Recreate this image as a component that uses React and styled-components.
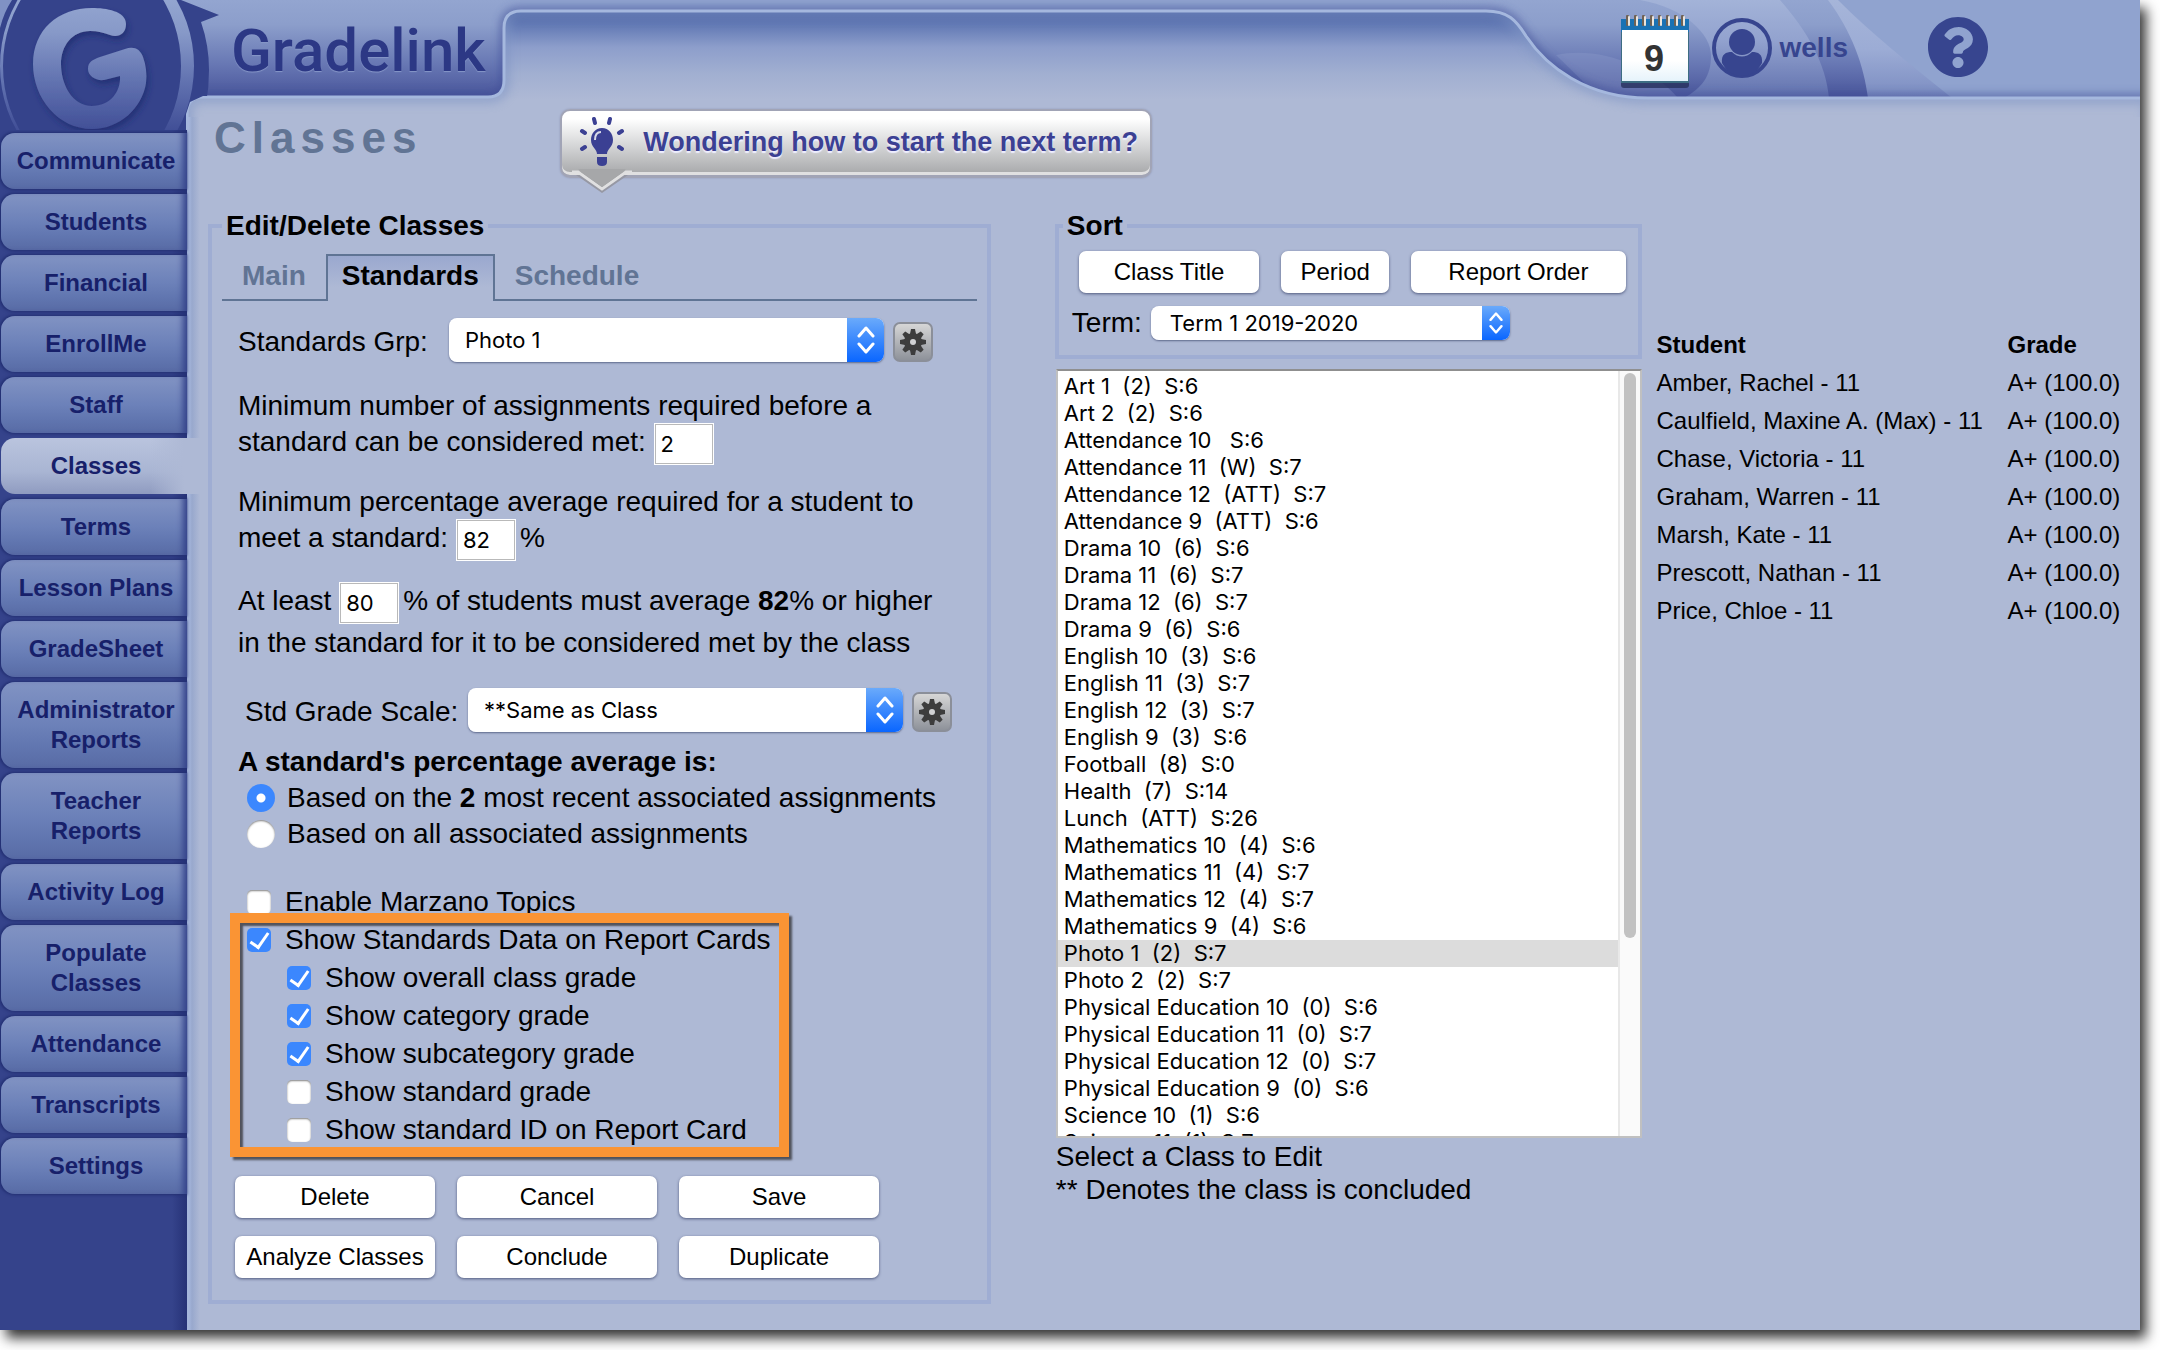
import styled, { createGlobalStyle, css } from "styled-components"
import { useState } from "react"
import { FaQuestionCircle } from "react-icons/fa"

const menu = [
    "Communicate", "Students", "Financial", "EnrollMe", "Staff", "Classes", "Terms",
    "Lesson Plans", "GradeSheet", "Administrator Reports", "Teacher Reports",
    "Activity Log", "Populate Classes", "Attendance", "Transcripts", "Settings",
]

const classes = [
    ["Art 1", "(2)", "S:6"],
    ["Art 2", "(2)", "S:6"],
    ["Attendance 10", "", "S:6"],
    ["Attendance 11", "(W)", "S:7"],
    ["Attendance 12", "(ATT)", "S:7"],
    ["Attendance 9", "(ATT)", "S:6"],
    ["Drama 10", "(6)", "S:6"],
    ["Drama 11", "(6)", "S:7"],
    ["Drama 12", "(6)", "S:7"],
    ["Drama 9", "(6)", "S:6"],
    ["English 10", "(3)", "S:6"],
    ["English 11", "(3)", "S:7"],
    ["English 12", "(3)", "S:7"],
    ["English 9", "(3)", "S:6"],
    ["Football", "(8)", "S:0"],
    ["Health", "(7)", "S:14"],
    ["Lunch", "(ATT)", "S:26"],
    ["Mathematics 10", "(4)", "S:6"],
    ["Mathematics 11", "(4)", "S:7"],
    ["Mathematics 12", "(4)", "S:7"],
    ["Mathematics 9", "(4)", "S:6"],
    ["Photo 1", "(2)", "S:7"],
    ["Photo 2", "(2)", "S:7"],
    ["Physical Education 10", "(0)", "S:6"],
    ["Physical Education 11", "(0)", "S:7"],
    ["Physical Education 12", "(0)", "S:7"],
    ["Physical Education 9", "(0)", "S:6"],
    ["Science 10", "(1)", "S:6"],
    ["Science 11", "(1)", "S:7"],
]

const students = [
    "Amber, Rachel - 11",
    "Caulfield, Maxine A. (Max) - 11",
    "Chase, Victoria - 11",
    "Graham, Warren - 11",
    "Marsh, Kate - 11",
    "Prescott, Nathan - 11",
    "Price, Chloe - 11",
]

const reportOptions = [
    { id: "overall", label: "Show overall class grade", checked: true },
    { id: "category", label: "Show category grade", checked: true },
    { id: "subcategory", label: "Show subcategory grade", checked: true },
    { id: "standard", label: "Show standard grade", checked: false },
    { id: "standardId", label: "Show standard ID on Report Card", checked: false },
]

export default function App() {
    const [tab, setTab] = useState("Standards")
    const [selected, setSelected] = useState("Photo 1")

    return (
        <>
            <GlobalStyle />
            <Shell>
                <HeaderArt />
                <Sidebar>
                    <Logo />
                    <nav>
                        <Menu>
                            {menu.map((m) => (
                                <li key={m}>
                                    <MenuLink href="#" $active={m === "Classes"}>{m}</MenuLink>
                                </li>
                            ))}
                        </Menu>
                    </nav>
                </Sidebar>
                <Page>
                    <Header>
                        <Brand>Gradelink</Brand>
                        <Tools>
                            <IconButton aria-label="Calendar"><CalendarIcon /></IconButton>
                            <UserLink href="#"><UserIcon />wells</UserLink>
                            <HelpButton aria-label="Help"><FaQuestionCircle size={62} /></HelpButton>
                        </Tools>
                    </Header>
                    <Content>
                        <TitleRow>
                            <Title>Classes</Title>
                            <Tip>
                                <BulbIcon />
                                Wondering how to start the next term?
                                <TipPointer />
                            </Tip>
                        </TitleRow>
                        <Columns>
                            <EditColumn>
                                <Panel $pad={10}>
                                    <Legend>Edit/Delete Classes</Legend>
                                    <Tabs role="tablist">
                                        {["Main", "Standards", "Schedule"].map((t) => (
                                            <Tab key={t} role="tab" aria-selected={t === tab} $active={t === tab} onClick={() => setTab(t)}>{t}</Tab>
                                        ))}
                                    </Tabs>
                                    <StandardsForm />
                                    <Actions>
                                        {["Delete", "Cancel", "Save", "Analyze Classes", "Conclude", "Duplicate"].map((a) => (
                                            <Button key={a}>{a}</Button>
                                        ))}
                                    </Actions>
                                </Panel>
                            </EditColumn>
                            <ListColumn>
                                <Panel $pad={4}>
                                    <Legend>Sort</Legend>
                                    <SortButtons>
                                        <Button $grow={180}>Class Title</Button>
                                        <Button $grow={108}>Period</Button>
                                        <Button $grow={214}>Report Order</Button>
                                    </SortButtons>
                                    <TermRow>
                                        <label htmlFor="term">Term:</label>
                                        <Dropdown id="term" options={["Term 1 2019-2020"]} small />
                                    </TermRow>
                                </Panel>
                                <ListFrame>
                                    <ClassList size={28} aria-label="Select a Class to Edit" value={selected} onChange={(e) => setSelected(e.target.value)}>
                                        {classes.map(([name, period, count]) => (
                                            <option key={name} value={name}>
                                                {name + "\u00a0\u00a0" + period + (period ? "\u00a0\u00a0" : "\u00a0") + count}
                                            </option>
                                        ))}
                                    </ClassList>
                                    <Track><Thumb /></Track>
                                </ListFrame>
                                <Notes>
                                    <p>Select a Class to Edit</p>
                                    <p>** Denotes the class is concluded</p>
                                </Notes>
                            </ListColumn>
                            <StudentColumn>
                                <StudentTable>
                                    <thead>
                                        <tr><th>Student</th><th>Grade</th></tr>
                                    </thead>
                                    <tbody>
                                        {students.map((s) => (
                                            <tr key={s}><td>{s}</td><td>A+ (100.0)</td></tr>
                                        ))}
                                    </tbody>
                                </StudentTable>
                            </StudentColumn>
                        </Columns>
                    </Content>
                </Page>
            </Shell>
        </>
    )
}

function StandardsForm() {
    return (
        <Form>
            <FieldRow>
                <FieldLabel htmlFor="group" $width={211}>Standards Grp:</FieldLabel>
                <Dropdown id="group" options={["Photo 1"]} />
                <GearButton aria-label="Edit standards groups"><GearIcon /></GearButton>
            </FieldRow>
            <Paragraph $gap={26}>
                <label htmlFor="minCount">Minimum number of assignments required before a<br />standard can be considered met: </label>
                <NumberInput id="minCount" defaultValue="2" />
            </Paragraph>
            <Paragraph $gap={24}>
                <label htmlFor="minAverage">Minimum percentage average required for a student to<br />meet a standard: </label>
                <NumberInput id="minAverage" defaultValue="82" />%
            </Paragraph>
            <Paragraph $gap={24} $loose>
                <label htmlFor="minStudents">At least </label>
                <NumberInput id="minStudents" defaultValue="80" />% of students must average <b>82</b>% or higher<br />
                in the standard for it to be considered met by the class
            </Paragraph>
            <FieldRow $indent={7} $gap={24}>
                <FieldLabel htmlFor="scale" $width={223}>Std Grade Scale:</FieldLabel>
                <Dropdown id="scale" options={["**Same as Class"]} />
                <GearButton aria-label="Edit grade scales"><GearIcon /></GearButton>
            </FieldRow>
            <Question>A standard's percentage average is:</Question>
            <RadioLabel>
                <Radio name="basis" defaultChecked />
                <span>Based on the <b>2</b> most recent associated assignments</span>
            </RadioLabel>
            <RadioLabel>
                <Radio name="basis" />
                <span>Based on all associated assignments</span>
            </RadioLabel>
            <CheckArea>
                <CheckLabel><Checkbox />Enable Marzano Topics</CheckLabel>
                <Highlight>
                    <CheckLabel><Checkbox defaultChecked />Show Standards Data on Report Cards</CheckLabel>
                    {reportOptions.map((o) => (
                        <CheckLabel key={o.id} $nested><Checkbox defaultChecked={o.checked} />{o.label}</CheckLabel>
                    ))}
                </Highlight>
            </CheckArea>
        </Form>
    )
}

function Dropdown({ id, options, small }) {
    return (
        <SelectBox $small={small}>
            <select id={id}>
                {options.map((o) => <option key={o}>{o}</option>)}
            </select>
            <Stepper $small={small}>
                <svg width="18" height="28" viewBox="0 0 18 28" fill="none" stroke="#fff" strokeWidth="3" strokeLinecap="round" strokeLinejoin="round">
                    <path d="M2 10L9 2L16 10M2 18L9 26L16 18" />
                </svg>
            </Stepper>
        </SelectBox>
    )
}

// top edge of the light page area, with the raised tab in the middle
const panelPath = "M187 150V113Q187 97 203 97H488Q504 97 504 80V28Q504 11 521 11H1486C1508 11 1516 20 1526 36C1546 66 1586 98 1648 98H2150V150Z"

function HeaderArt() {
    return (
        <Art viewBox="0 0 2140 136" preserveAspectRatio="none" aria-hidden="true">
            <defs>
                <linearGradient id="sky" x1="0" y1="0" x2="0" y2="98" gradientUnits="userSpaceOnUse">
                    <stop offset="0" stopColor="#93a5d0" />
                    <stop offset="0.25" stopColor="#8c9ecb" />
                    <stop offset="0.65" stopColor="#6878b4" />
                    <stop offset="1" stopColor="#48549a" />
                </linearGradient>
                <linearGradient id="light" x1="0" y1="0" x2="0" y2="98" gradientUnits="userSpaceOnUse">
                    <stop offset="0" stopColor="#a3b3d8" />
                    <stop offset="0.4" stopColor="#93a3cf" />
                    <stop offset="1" stopColor="#6171ae" />
                </linearGradient>
                <linearGradient id="wedge" x1="0" y1="0" x2="0" y2="98" gradientUnits="userSpaceOnUse">
                    <stop offset="0" stopColor="#a6b5d9" />
                    <stop offset="0.5" stopColor="#9cacd5" />
                    <stop offset="1" stopColor="#7b8cc1" />
                </linearGradient>
                <linearGradient id="well" x1="0" y1="12" x2="0" y2="100" gradientUnits="userSpaceOnUse">
                    <stop offset="0" stopColor="#4a62a3" />
                    <stop offset="0.15" stopColor="#637ab5" />
                    <stop offset="0.4" stopColor="#8d9ecb" />
                    <stop offset="0.7" stopColor="#a1afd1" />
                    <stop offset="1" stopColor="#aeb9d5" />
                </linearGradient>
                <filter id="soft" x="-5%" y="-20%" width="110%" height="140%"><feGaussianBlur stdDeviation="4" /></filter>
                <clipPath id="panelClip"><path d={panelPath} /></clipPath>
            </defs>
            <rect width="2140" height="136" fill="#35438b" />
            <rect x="150" width="1500" height="98" fill="url(#sky)" />
            <rect x="520" width="1110" height="12" fill="#90a3cf" />
            <rect x="1480" width="400" height="98" fill="url(#light)" />
            <path d="M1440 0H1640C1685 8 1711 34 1711 56C1711 76 1702 88 1684 98H1440Z" fill="url(#sky)" />
            <path d="M1556 55C1600 46 1650 66 1678 98H1600Z" fill="#8f9fcc" opacity="0.35" />
            <path d="M1780 0H1832C1854 32 1866 66 1870 98H1829C1826 64 1808 32 1780 0Z" fill="url(#sky)" />
            <path d="M1828 0H1960V98H1868C1864 66 1852 32 1828 0Z" fill="url(#wedge)" />
            <path d="M1838 0H2140V98H1952C1912 66 1872 34 1838 0Z" fill="#90a3cf" />
            <path d={panelPath} fill="none" stroke="#3c4b95" strokeWidth="8" opacity="0.6" filter="url(#soft)" />
            <path d={panelPath} fill="#aeb9d5" />
            <g clipPath="url(#panelClip)">
                <path d="M503 10H1500C1540 20 1550 100 1660 100H503Z" fill="url(#well)" />
                <path d={panelPath} fill="none" stroke="#7f95c5" strokeWidth="14" opacity="0.5" filter="url(#soft)" />
            </g>
            <path d={panelPath} fill="none" stroke="#a5b8de" strokeWidth="3" />
        </Art>
    )
}

function Logo() {
    return (
        <LogoArt viewBox="0 0 222 130" aria-label="Gradelink logo" role="img">
            <defs>
                <linearGradient id="metal" x1="0" y1="0" x2="0" y2="130" gradientUnits="userSpaceOnUse">
                    <stop offset="0" stopColor="#93a5d0" />
                    <stop offset="0.25" stopColor="#8799c8" />
                    <stop offset="0.6" stopColor="#6475b2" />
                    <stop offset="1" stopColor="#414f97" />
                </linearGradient>
                <filter id="glow" x="-20%" y="-20%" width="140%" height="140%"><feDropShadow dx="2" dy="4" stdDeviation="3" floodColor="#1d2a6d" floodOpacity="0.7" /></filter>
                <clipPath id="logoClip"><rect width="222" height="130" /></clipPath>
            </defs>
            <path d="M0 0H181L219 15L201 22Q209 45 209 70Q209 104 198 130H0Z" fill="#35438b" />
            <g clipPath="url(#logoClip)">
                <path d="M0 0H12Q4 12 0 28Z" fill="#8092c4" />
                <path fillRule="evenodd" d="M0 66A97 115 0 0 1 194 66A97 115 0 0 1 0 66ZM3 66A89 110 0 0 1 181 66A89 110 0 0 1 3 66Z" fill="url(#metal)" />
                <path filter="url(#glow)" d="M33 64C33 30 58 8 92 8C106 8 126 11 126 24C126 34 118 38 110 35C104 33 98 31 90 31C72 31 61 46 61 64C61 84 72 106 92 106C110 106 121 92 120 76L104 80C96 81 88 76 88 69C88 62 92 60 100 57L125 49C134 46 140 49 143 57C146 65 147 74 146 83C142 108 120 129 92 129C58 129 33 98 33 64Z" fill="url(#metal)" />
            </g>
        </LogoArt>
    )
}

function CalendarIcon() {
    return (
        <svg width="72" height="76" viewBox="0 0 72 76">
            <defs>
                <linearGradient id="paper" x1="0" y1="0" x2="0" y2="1">
                    <stop offset="0.6" stopColor="#fff" />
                    <stop offset="1" stopColor="#e6f3fb" />
                </linearGradient>
            </defs>
            <rect x="2" y="60" width="68" height="14" rx="3" fill="#27305c" opacity="0.8" />
            <rect x="2" y="5" width="68" height="64" fill="#3d6d83" />
            <rect x="2" y="5" width="68" height="13" fill="#1a72b4" />
            <rect x="3" y="16" width="66" height="51" fill="url(#paper)" />
            {[8, 16, 24, 32, 40, 48, 56, 63].map((x) => (
                <g key={x}>
                    <rect x={x - 1} y="1" width="3" height="11" rx="1" fill="#6f6255" />
                    <rect x={x + 1} y="2" width="2" height="10" rx="1" fill="#e9e4dd" />
                </g>
            ))}
            <text x="35" y="57" textAnchor="middle" fontFamily="Liberation Sans, Arial, sans-serif" fontWeight="700" fontSize="36" fill="#333">9</text>
        </svg>
    )
}

function UserIcon() {
    return (
        <svg width="60" height="60" viewBox="0 0 60 60" fill="#37458f">
            <circle cx="30" cy="30" r="28" fill="none" stroke="#37458f" strokeWidth="4" />
            <circle cx="30" cy="24" r="13" />
            <path d="M10 45C9 36 14 34 20 34C26 40 34 40 40 34C46 34 51 36 50 45C46 53 38 58 30 58C22 58 14 53 10 45Z" />
        </svg>
    )
}

function GearIcon() {
    return (
        <svg width="28" height="28" viewBox="-14 -14 28 28" fill="#3d3d3d">
            {[0, 45, 90, 135].map((a) => (
                <path key={a} d="M-2 -13H2L3 -8V8L2 13H-2L-3 8V-8Z" transform={`rotate(${a})`} />
            ))}
            <circle r="9" />
            <circle r="3" fill="#d0d1d3" />
        </svg>
    )
}

function BulbIcon() {
    return (
        <svg width="48" height="50" viewBox="0 0 48 50" fill="#3b4093">
            <path d="M24 11C17 11 13 17 13 23C13 30 19 32 19 37H29C29 32 35 30 35 23C35 17 31 11 24 11Z" />
            <path d="M17 23C17 18 19 15 23 15" fill="none" stroke="#d9dae8" strokeWidth="2" />
            <path d="M19 40H29V45Q29 49 24 49Q19 49 19 45Z" />
            <g stroke="#3b4093" strokeWidth="4" strokeLinecap="round">
                <path d="M16 2L17 6M32 2L31 6M4 14L7 16M44 14L41 16M4 32L7 30M44 32L41 30" />
            </g>
        </svg>
    )
}

function TipPointer() {
    return (
        <Pointer width="60" height="24" viewBox="0 0 60 24">
            <path d="M0 6L4 6L30 24L56 6H60Z" fill="#9698a4" />
            <path d="M0 3H6L30 20L54 3H60" fill="#a2a4a6" stroke="#e0e0e1" strokeWidth="3" />
            <path d="M6 0H54L51 3L30 18L9 3Z" fill="#a6a7a9" />
        </Pointer>
    )
}

const GlobalStyle = createGlobalStyle`
    * {
        box-sizing: border-box;
    }
    body {
        margin: 0;
        background: #fff;
        font-family: "Liberation Sans", Arial, sans-serif;
        font-size: 28px;
        color: #000;
    }
    button, input, select {
        font: inherit;
        color: inherit;
    }
    p, h1, h2, ul {
        margin: 0;
        padding: 0;
    }
`
const Shell = styled.div`
    position: relative;
    display: flex;
    min-height: calc(100vh - 20px);
    margin: 0 20px 20px 0;
    background: #aeb9d5;
    box-shadow: 6px 8px 12px rgba(0, 0, 0, 0.8);
`
const Art = styled.svg`
    position: absolute;
    top: 0;
    left: 0;
    width: 100%;
    height: 136px;
`
const Sidebar = styled.aside`
    position: relative;
    z-index: 1;
    flex: 0 0 187px;
    min-width: 0;
    background: linear-gradient(90deg, #35438b 92%, #263277) 0 130px no-repeat;
`
const LogoArt = styled.svg`
    display: block;
    width: 222px;
    height: 130px;
    clip-path: polygon(0 0, 100% 0, 100% 96px, 203px 96px, 190px 102px, 186px 114px, 186px 100%, 0 100%);
`
const Menu = styled.ul`
    display: flex;
    flex-direction: column;
    gap: 5px;
    padding-top: 3px;
    list-style: none;
`
const MenuLink = styled.a`
    display: flex;
    align-items: center;
    justify-content: center;
    min-height: 56px;
    padding: 13px 10px 13px 14px;
    margin-left: 1px;
    border-radius: 14px 0 0 14px;
    background: linear-gradient(#8193c3, #6c81b9 50%, #6176b0 75%, #586ba5);
    box-shadow: -1px 0 3px 1px #222f72, inset -8px 0 6px -4px #35438b;
    font-size: 24px;
    line-height: 30px;
    font-weight: 700;
    text-align: center;
    text-decoration: none;
    color: #17206a;
    ${({ $active }) => $active && css`
        margin-right: -13px;
        padding-right: 23px;
        background: linear-gradient(90deg, rgba(174, 185, 213, 0) 75%, #aeb9d5 92%), linear-gradient(#bac4de, #a9b5d3 60%, #8f9bc0);
        box-shadow: none;
    `}
`
const Page = styled.div`
    position: relative;
    flex: 1;
    min-width: 0;
    display: flex;
    flex-direction: column;
`
const Header = styled.header`
    display: flex;
    justify-content: space-between;
    height: 97px;
    padding: 0 151px 0 44px;
`
const Brand = styled.div`
    font-family: Roboto, "Liberation Sans", sans-serif;
    font-size: 60px;
    line-height: 102px;
    font-weight: 500;
    color: #2c3885;
    text-shadow: 0 1px 1px #8797c8;
`
const Tools = styled.div`
    display: flex;
    align-items: flex-start;
    padding-top: 14px;
`
const IconButton = styled.button`
    display: flex;
    padding: 0;
    border: 0;
    background: none;
    color: #37458f;
    cursor: pointer;
`
const UserLink = styled.a`
    display: flex;
    align-items: center;
    gap: 8px;
    margin: 4px 79px 0 21px;
    font-weight: 700;
    color: #37458f;
    text-decoration: none;
`
const HelpButton = styled(IconButton)`
    margin-top: 2px;
`
const Content = styled.main`
    flex: 1;
    padding: 0 17px 26px 21px;
    background: linear-gradient(90deg, #a5b6dc 2px, #98a8cd 5px, #aeb9d5 13px) 0 20px no-repeat;
`
const TitleRow = styled.div`
    display: flex;
    align-items: flex-start;
    gap: 138px;
    height: 114px;
    padding: 12px 0 0 6px;
`
const Title = styled.h1`
    font-size: 44px;
    line-height: 58px;
    letter-spacing: 6px;
    color: #617494;
`
const Tip = styled.button`
    position: relative;
    display: flex;
    align-items: center;
    gap: 17px;
    height: 69px;
    padding: 0 12px 2px 16px;
    border: 2px solid #a1a4b6;
    border-bottom-width: 3px;
    border-radius: 10px;
    background: linear-gradient(#fff 12%, #d9dadb 50%, #a6a7a9);
    box-shadow: inset 0 -3px #e0e0e1, 0 0 2px #8c93b3;
    font-size: 27px;
    font-weight: 700;
    white-space: nowrap;
    color: #3b4093;
    text-shadow: 0 2px 1px #eef;
`
const Pointer = styled.svg`
    position: absolute;
    left: 10px;
    bottom: -18px;
`
const Columns = styled.div`
    display: flex;
    align-items: flex-start;
`
const EditColumn = styled.section`
    flex: 782 1 0;
    min-width: 0;
`
const ListColumn = styled.section`
    flex: 586 1 0;
    min-width: 0;
    margin-left: 64px;
`
const StudentColumn = styled.section`
    flex: 466 1 0;
    min-width: 0;
    margin: 115px 0 0 15px;
`
const Panel = styled.fieldset`
    min-width: 0;
    margin: 0;
    padding: 0 ${({ $pad }) => $pad}px;
    border: 4px solid #9fadd3;
`
const Legend = styled.legend`
    padding: 0 4px;
    line-height: 30px;
    font-weight: 700;
`
const Tabs = styled.div`
    display: flex;
    gap: 4px;
    margin-top: 13px;
    padding-left: 4px;
    border-bottom: 2px solid #5f7494;
`
const Tab = styled.button`
    padding: 4px 14px 7px;
    border: 2px solid transparent;
    border-bottom: 0;
    background: none;
    line-height: 32px;
    font-weight: 700;
    color: #617494;
    ${({ $active }) => $active && css`
        margin-bottom: -2px;
        padding-bottom: 9px;
        border-color: #5f7494;
        background: linear-gradient(#9aa8cf, #aeb9d5 70%);
        color: #000;
    `}
`
const Form = styled.div`
    padding: 17px 16px 0;
`
const FieldRow = styled.div`
    display: flex;
    align-items: flex-end;
    margin-top: ${({ $gap = 0 }) => $gap}px;
    padding-left: ${({ $indent = 0 }) => $indent}px;
`
const FieldLabel = styled.label`
    flex: 0 0 ${({ $width }) => $width}px;
    line-height: 40px;
`
const SelectBox = styled.div`
    display: grid;
    flex: 0 1 ${({ $small }) => ($small ? 359 : 435)}px;
    min-width: 0;
    height: ${({ $small }) => ($small ? 34 : 44)}px;
    border-radius: 8px;
    overflow: hidden;
    box-shadow: 0 1px 2px rgba(40, 50, 90, 0.6);
    select {
        grid-area: 1 / 1;
        width: 100%;
        min-width: 0;
        padding: 0 48px 0 ${({ $small }) => ($small ? 19 : 16)}px;
        border: 0;
        background: #fff;
        appearance: none;
        font-family: Inter, "Liberation Sans", sans-serif;
        font-size: 22px;
    }
`
const Stepper = styled.span`
    grid-area: 1 / 1;
    justify-self: end;
    display: flex;
    align-items: center;
    justify-content: center;
    width: ${({ $small }) => ($small ? 28 : 37)}px;
    background: linear-gradient(#6aaafb, #0a66ff);
    pointer-events: none;
    svg {
        height: ${({ $small }) => ($small ? 22 : 28)}px;
    }
`
const GearButton = styled.button`
    display: flex;
    align-items: center;
    justify-content: center;
    flex: 0 0 40px;
    height: 40px;
    margin-left: 9px;
    padding: 0;
    border: 2px solid #8b8f99;
    border-radius: 7px;
    background: linear-gradient(#d6d6d6, #8e929a);
`
const Paragraph = styled.div`
    margin-top: ${({ $gap }) => $gap}px;
    line-height: ${({ $loose }) => ($loose ? 42 : 36)}px;
    white-space: nowrap;
`
const NumberInput = styled.input.attrs({ type: "text" })`
    width: 60px;
    height: 42px;
    margin: -6px 4px -6px 0;
    padding: 0 6px;
    border: 1px solid #fff;
    outline: 1px solid #b9b9b9;
    outline-offset: -2px;
    background: #fff;
    vertical-align: middle;
    font-family: Inter, "Liberation Sans", sans-serif;
    font-size: 22px;
`
const Question = styled.h2`
    margin-top: 12px;
    font-size: 28px;
    line-height: 36px;
`
const RadioLabel = styled.label`
    display: flex;
    align-items: center;
    gap: 12px;
    padding-left: 9px;
    line-height: 36px;
    white-space: nowrap;
`
const Radio = styled.input.attrs({ type: "radio" })`
    width: 28px;
    height: 28px;
    margin: 0;
    border-radius: 50%;
    background: #fff;
    box-shadow: inset 0 1px 2px rgba(0, 0, 0, 0.5);
    appearance: none;
    &:checked {
        background: radial-gradient(circle, #fff 4px, #3b87fe 5px);
        box-shadow: none;
    }
`
const CheckArea = styled.div`
    margin-top: 31px;
`
const CheckLabel = styled.label`
    display: flex;
    align-items: center;
    gap: 14px;
    padding-left: ${({ $nested }) => ($nested ? 49 : 9)}px;
    line-height: 38px;
`
const Checkbox = styled.input.attrs({ type: "checkbox" })`
    display: grid;
    place-items: center;
    width: 24px;
    height: 24px;
    margin: 0;
    border-radius: 5px;
    background: #fff;
    box-shadow: inset 0 1px 2px rgba(0, 0, 0, 0.5);
    appearance: none;
    &:checked {
        background: #3b87fe;
        box-shadow: none;
    }
    &:checked::after {
        content: "";
        width: 8px;
        height: 16px;
        margin-top: -4px;
        border: solid #fff;
        border-width: 0 3px 3px 0;
        transform: rotate(35deg);
    }
`
const Highlight = styled.div`
    position: relative;
    width: fit-content;
    &::after {
        content: "";
        position: absolute;
        inset: -8px -18px -8px -8px;
        border: 10px solid #fa9434;
        box-shadow: 3px 3px 2px #50525c, inset 3px 3px 2px #50525c;
        pointer-events: none;
    }
`
const Actions = styled.div`
    display: grid;
    grid-template-columns: repeat(3, minmax(0, 200px));
    gap: 18px 22px;
    padding: 27px 13px 22px;
`
const Button = styled.button`
    flex: ${({ $grow = 1 }) => $grow} 1 0;
    height: 42px;
    padding: 0;
    border: 0;
    border-radius: 7px;
    background: #fff;
    box-shadow: 0 1px 3px rgba(40, 50, 90, 0.7);
    font-size: 24px;
    line-height: 40px;
    white-space: nowrap;
`
const SortButtons = styled.div`
    display: flex;
    gap: 22px;
    padding: 10px 8px 0 16px;
`
const TermRow = styled.div`
    display: flex;
    align-items: center;
    gap: 9px;
    padding: 13px 12px 15px 9px;
    line-height: 34px;
`
const ListFrame = styled.div`
    display: flex;
    height: 769px;
    margin: 10px 0 0 1px;
    border: 2px solid #c0c0c0;
    border-top-color: #8f8f8f;
    background: #fff;
`
const ClassList = styled.select`
    flex: 1;
    min-width: 0;
    padding: 2px 0 0;
    border: 0;
    outline: 0;
    background: #fff;
    font-family: Inter, "Liberation Sans", sans-serif;
    font-size: 22px;
    scrollbar-width: none;
    option {
        min-height: 27px;
        padding: 0 6px;
        line-height: 27px;
        color: #000;
    }
    option:checked {
        background: linear-gradient(#dcdcdc, #dcdcdc);
        -webkit-text-fill-color: #000;
    }
`
const Track = styled.div`
    width: 22px;
    padding: 2px 3px 0 4px;
    border-left: 2px solid #e8e8e8;
    background: #fafafa;
`
const Thumb = styled.div`
    width: 12px;
    height: 74%;
    border-radius: 6px;
    background: #c2c2c2;
`
const Notes = styled.div`
    padding: 2px 0 0 1px;
    line-height: 33px;
`
const StudentTable = styled.table`
    width: 100%;
    border-collapse: collapse;
    font-size: 24px;
    line-height: 38px;
    text-align: left;
    white-space: nowrap;
    th, td {
        padding: 0;
    }
    th:first-child {
        width: 351px;
    }
`
